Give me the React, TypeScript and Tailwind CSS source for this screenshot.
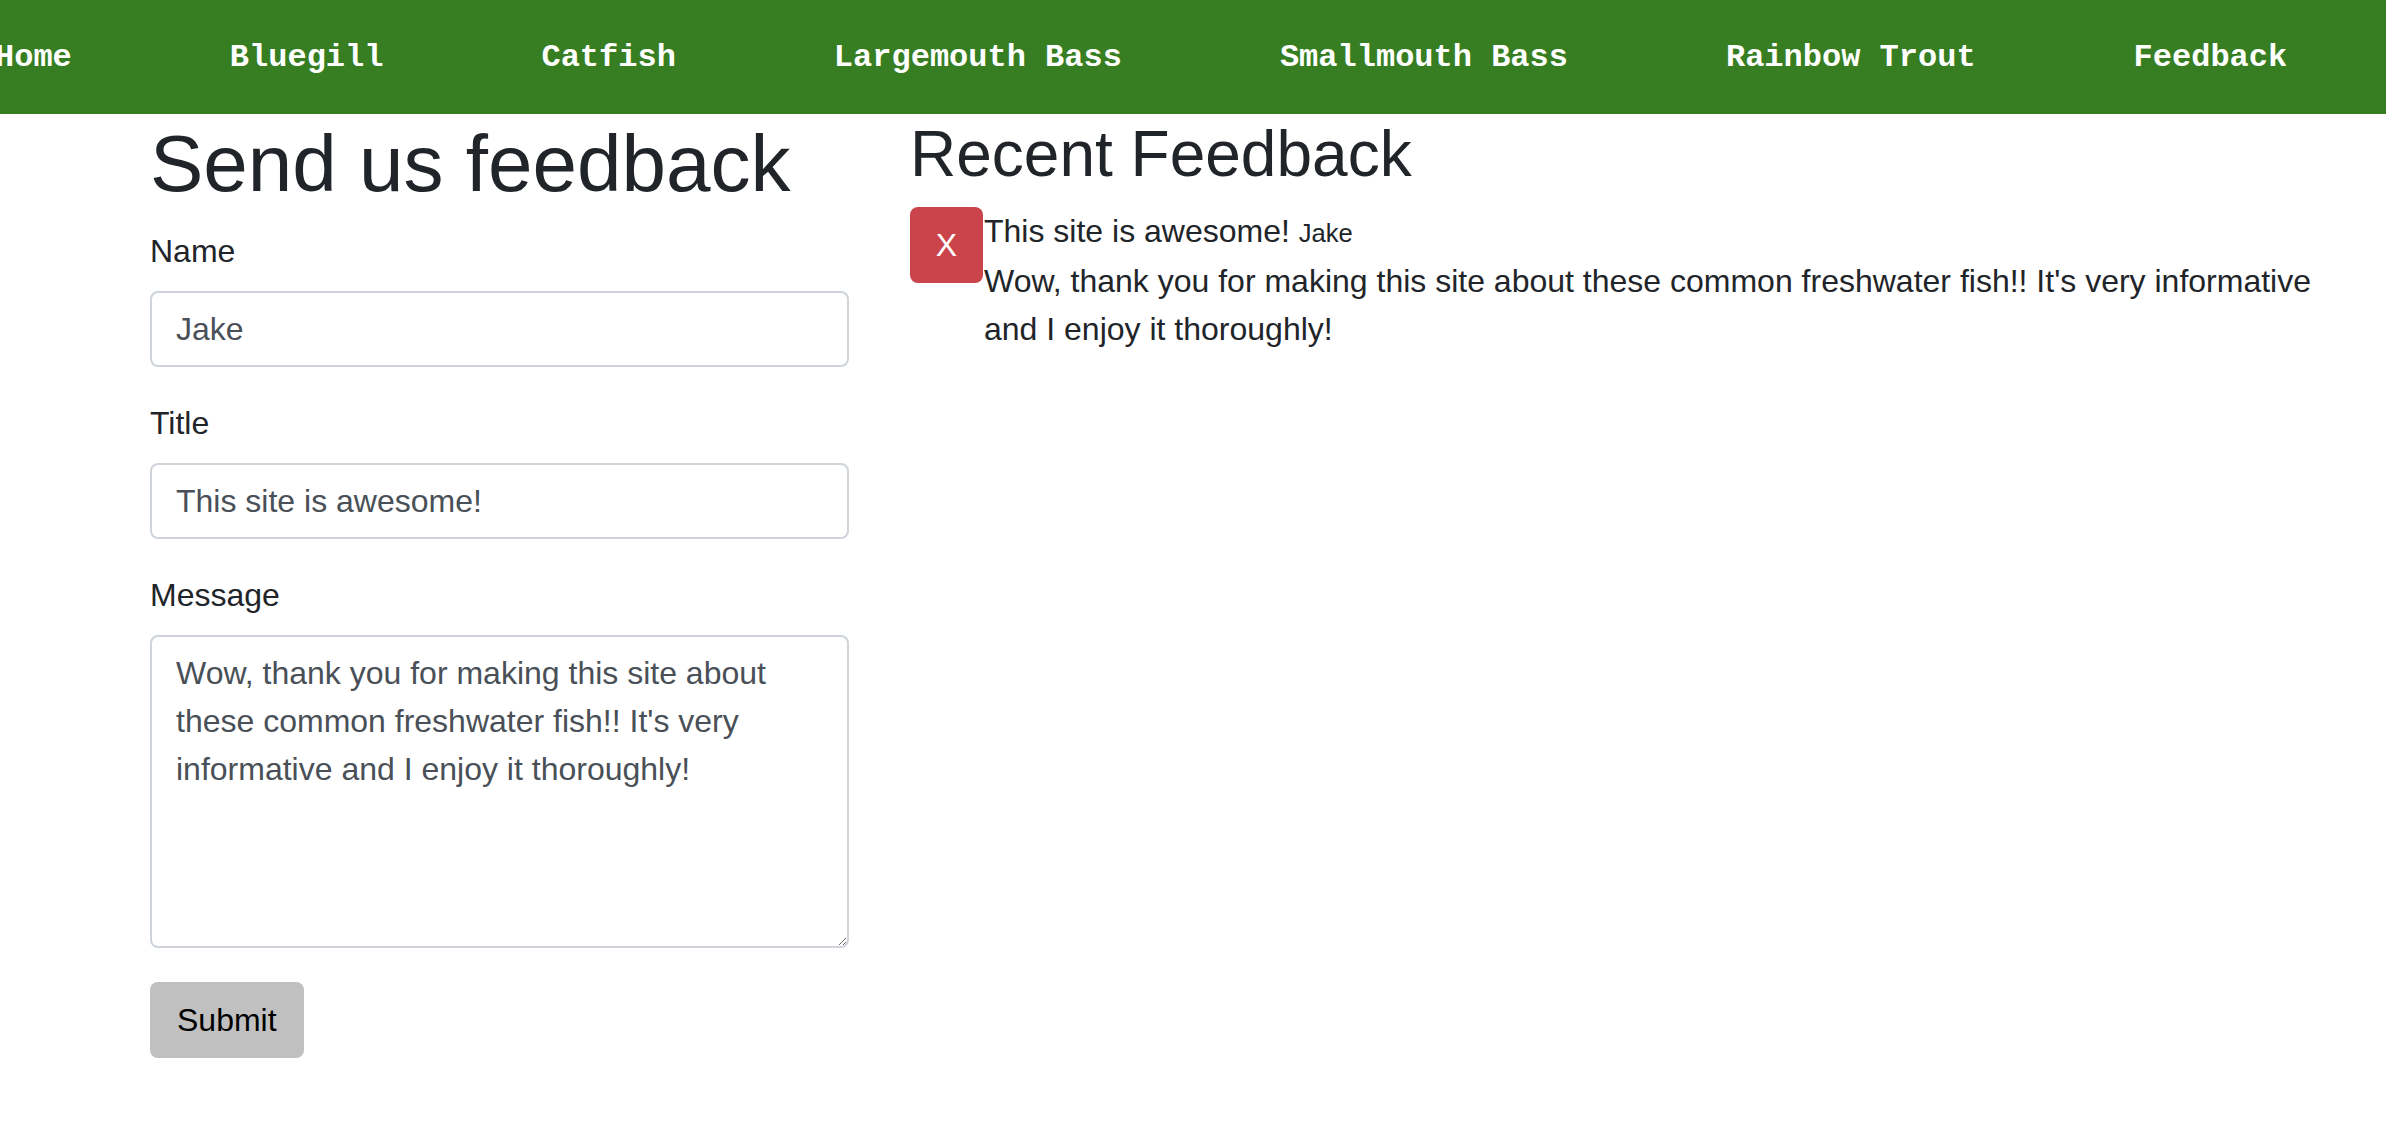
const NAV_ITEMS = [
  "Home",
  "Bluegill",
  "Catfish",
  "Largemouth Bass",
  "Smallmouth Bass",
  "Rainbow Trout",
  "Feedback",
];

const MESSAGE =
  "Wow, thank you for making this site about these common freshwater fish!! It's very informative and I enjoy it thoroughly!";

function Field({ label, value }: { label: string; value: string }) {
  return (
    <div className="mb-[32px]">
      <label className="mb-[16px] block leading-[48px]">{label}</label>
      <input
        readOnly
        defaultValue={value}
        className="block h-[76px] w-full rounded-[8px] border-2 border-[#ced4da] bg-white px-[24px] text-[32px] leading-[48px] text-[#495057] outline-none"
      />
    </div>
  );
}

export default function App() {
  return (
    <div className="min-h-screen bg-white font-['Liberation_Sans',Arial,sans-serif] text-[32px] leading-[48px] text-[#212529]">
      {/* Top nav */}
      <nav className="flex h-[114px] items-center overflow-hidden bg-[#377e22] pt-[2px]">
        <ul className="-ml-[5px] flex items-center gap-[158px] whitespace-nowrap font-['Liberation_Mono','Courier_New',monospace] text-[32px] font-bold text-white">
          {NAV_ITEMS.map((item) => (
            <li key={item}>{item}</li>
          ))}
        </ul>
      </nav>

      <main className="flex gap-[61px] pl-[150px] pr-[30px] pt-[2px]">
        {/* Left: feedback form */}
        <section className="w-[699px] shrink-0">
          <h1 className="mb-[15px] text-[80px] leading-[96px]">Send us feedback</h1>
          <Field label="Name" value="Jake" />
          <Field label="Title" value="This site is awesome!" />
          <div className="mb-[34px]">
            <label className="mb-[16px] block leading-[48px]">Message</label>
            <textarea
              readOnly
              defaultValue={MESSAGE}
              className="block h-[313px] w-full rounded-[8px] border-2 border-[#ced4da] bg-white px-[24px] py-[12px] text-[32px] leading-[48px] text-[#495057] outline-none"
            />
          </div>
          <button className="h-[76px] rounded-[8px] bg-[#c0c0c0] px-[27px] text-[32px] leading-[48px] text-black">
            Submit
          </button>
        </section>

        {/* Right: recent feedback */}
        <section className="min-w-0 flex-1">
          <h2 className="mb-[14px] text-[64px] leading-[77px]">Recent Feedback</h2>
          <div className="flex items-start">
            <button className="h-[76px] w-[73px] shrink-0 rounded-[8px] bg-[#cc444b] text-[32px] leading-[48px] text-white">
              X
            </button>
            <div className="min-w-0 flex-1 pl-[1px]">
              <div>
                This site is awesome! <small className="text-[25.6px]">Jake</small>
              </div>
              <div>{MESSAGE}</div>
            </div>
          </div>
        </section>
      </main>
    </div>
  );
}
